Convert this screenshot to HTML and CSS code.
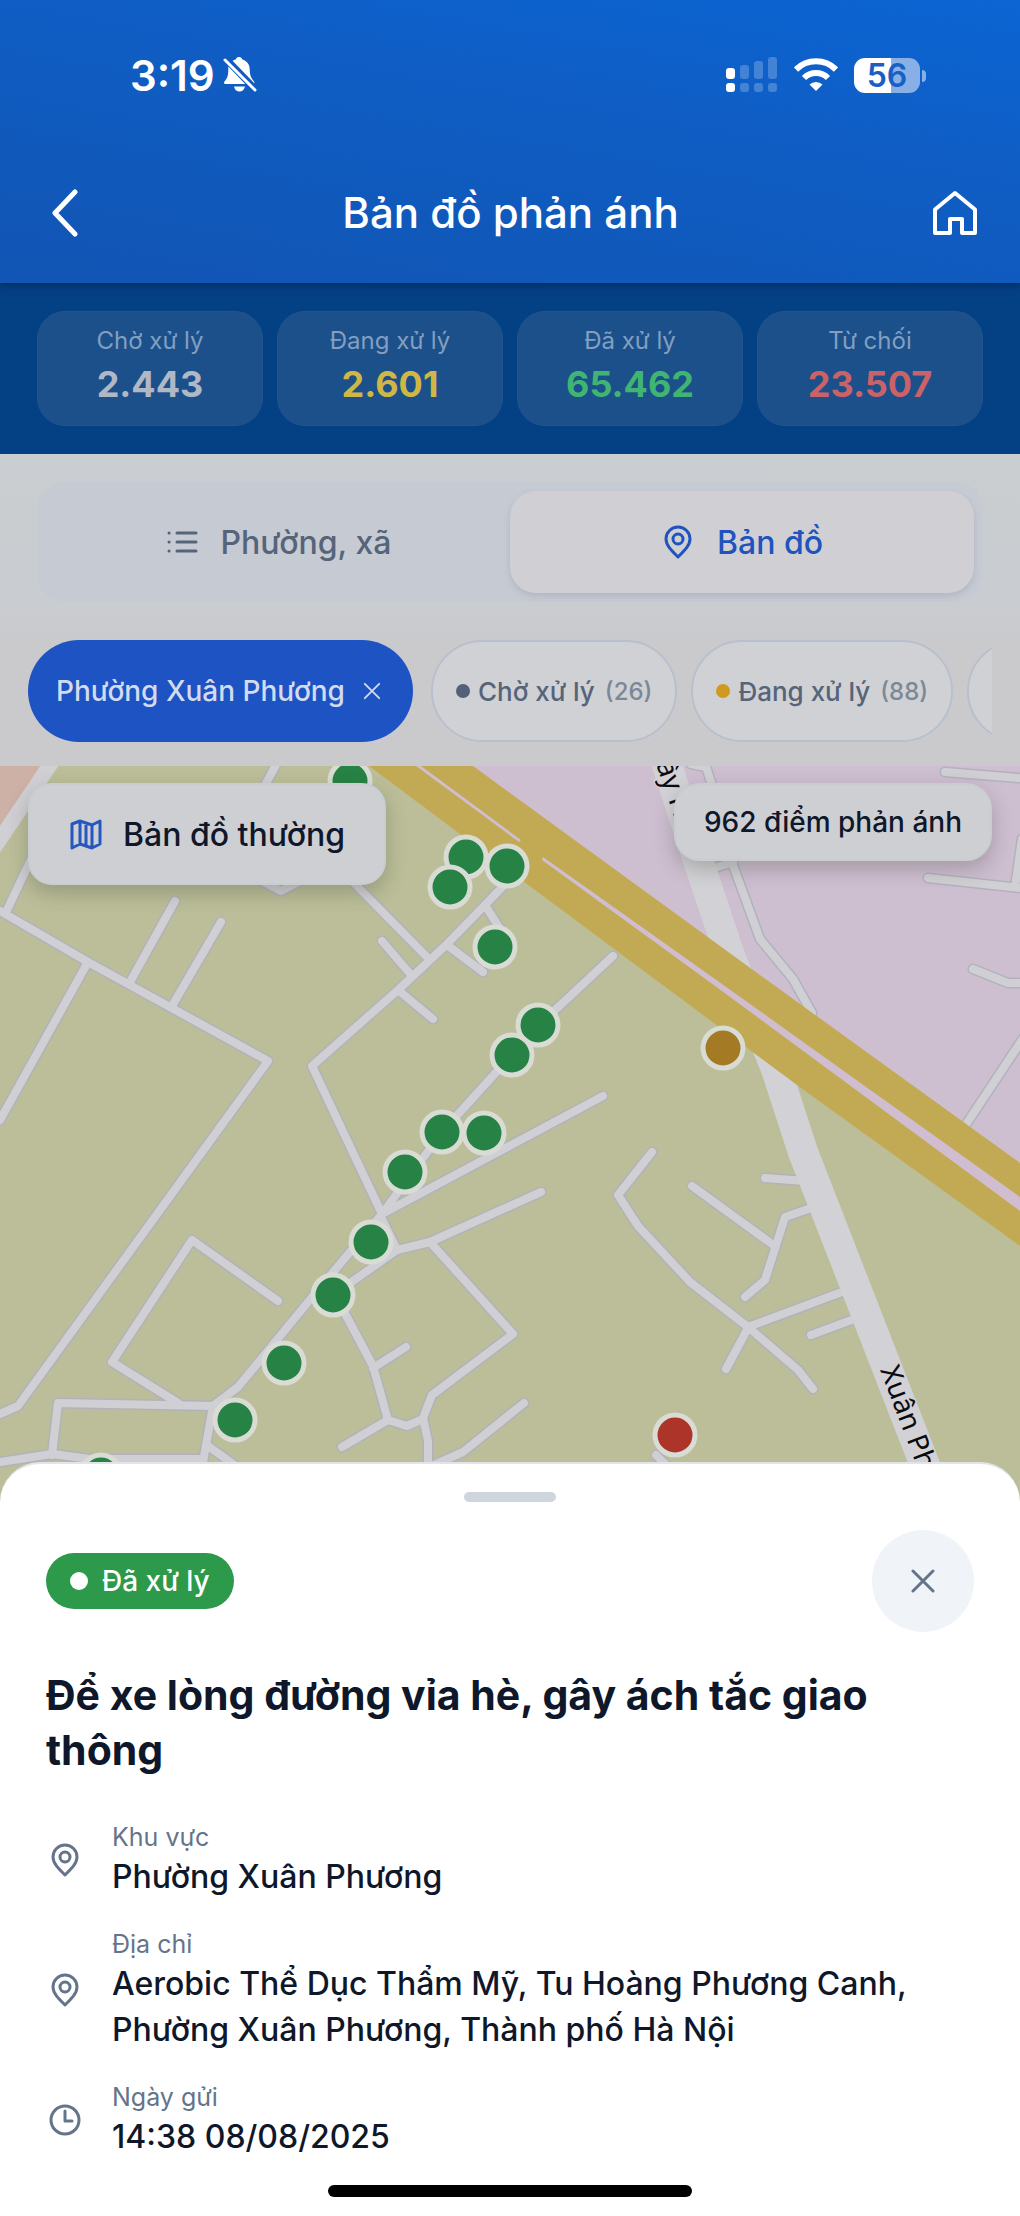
FILE: index.html
```
<!DOCTYPE html>
<html lang="vi">
<head>
	<meta charset="UTF-8">
	<meta name="viewport" content="width=device-width, initial-scale=1">
	<title>Bản đồ phản ánh</title>

	<link rel="stylesheet" href="styles.css">
</head>
<body>
	<div class="page">
		<header class="header">
			<div class="status-bar">
				<div class="status-left">
					<span class="time">3:19</span>
					<svg class="bell" width="34" height="36" viewBox="0 0 34 36">
						<path fill="#fff" d="M16 0c1.800 0 3 1 3.300 2.600C24 4 26.500 7.500 26.700 12c.2 6 1 8.500 4.300 12.500.8 1 .4 2.500-1 2.500H2.500c-1.500 0-2-1.500-1-2.500C4.500 21 5.300 18.500 5.300 12c0-4.500 2.600-8 7.400-9.400C13 1 14.200 0 16 0zM11 29.500h11c-.6 3-2.700 5-5.500 5s-5-2-5.500-5z"/>
						<path stroke="#115bc2" stroke-width="7" d="M2 1l31 32"/>
						<path stroke="#fff" stroke-width="3" stroke-linecap="round" d="M2 3l30 30"/>
					</svg>
				</div>
				<div class="status-right">
					<svg width="52" height="36" viewBox="0 0 52 36" fill="#fff">
						<rect x="0" y="11" width="9" height="11" rx="3"/>
						<rect x="0" y="26" width="9" height="9" rx="3"/>
						<g opacity=".22">
							<rect x="14" y="8" width="9" height="14" rx="3"/>
							<rect x="14" y="26" width="9" height="9" rx="3"/>
							<rect x="28" y="4" width="9" height="18" rx="3"/>
							<rect x="28" y="26" width="9" height="9" rx="3"/>
							<rect x="42" y="0" width="9" height="22" rx="3"/>
							<rect x="42" y="26" width="9" height="9" rx="3"/>
						</g>
					</svg>
					<svg width="44" height="34" viewBox="0 0 44 34" fill="none" stroke="#fff">
						<path stroke-width="6" d="M2 11.500a28.500 28.500 0 0 1 40 0"/>
						<path stroke-width="6" d="M10 20a17 17 0 0 1 24 0"/>
						<path fill="#fff" stroke="none" d="M15.500 26.500a9.500 9.500 0 0 1 13 0L22 33z"/>
					</svg>
					<div class="battery"><span>56</span></div>
				</div>
			</div>
			<div class="nav-bar">
				<button class="nav-btn" aria-label="Quay lại">
					<svg width="28" height="48" viewBox="0 0 28 48" fill="none" stroke="#fff" stroke-width="5" stroke-linecap="round" stroke-linejoin="round"><path d="M25 3L5 24l20 21"/></svg>
				</button>
				<h1>Bản đồ phản ánh</h1>
				<a class="nav-btn" href="#" aria-label="Trang chủ">
					<svg width="44" height="46" viewBox="0 0 44 46" fill="none" stroke="#fff" stroke-width="4" stroke-linejoin="round"><path d="M2 19.500L22 3l20 16.500V43H29V29H17v14H2z"/></svg>
				</a>
			</div>
		</header>

		<section class="stats">
			<div class="stat">
				<span class="stat-label">Chờ xử lý</span>
				<strong class="stat-value gray">2.443</strong>
			</div>
			<div class="stat">
				<span class="stat-label">Đang xử lý</span>
				<strong class="stat-value yellow">2.601</strong>
			</div>
			<div class="stat">
				<span class="stat-label">Đã xử lý</span>
				<strong class="stat-value green">65.462</strong>
			</div>
			<div class="stat">
				<span class="stat-label">Từ chối</span>
				<strong class="stat-value red">23.507</strong>
			</div>
		</section>

		<section class="controls">
			<div class="tabs">
				<button class="tab">
					<svg width="34" height="34" viewBox="0 0 34 34" fill="none" stroke="currentColor" stroke-width="3" stroke-linecap="round"><path d="M12 8h19M12 17h19M12 26h19M4 8h.1M4 17h.1M4 26h.1"/></svg>
					Phường, xã
				</button>
				<button class="tab active">
					<svg width="34" height="34" viewBox="0 0 34 34" fill="none" stroke="currentColor" stroke-width="3" stroke-linejoin="round"><path d="M17 32C11 26 5 20.500 5 14a12 12 0 0 1 24 0c0 6.500-6 12-12 18z"/><circle cx="17" cy="14" r="5"/></svg>
					Bản đồ
				</button>
			</div>
			<div class="chips">
				<button class="chip chip-area">
					Phường Xuân Phương
					<svg width="18" height="18" viewBox="0 0 20 20" fill="none" stroke="currentColor" stroke-width="2" stroke-linecap="round"><path d="M2 2l16 16M18 2L2 18"/></svg>
				</button>
				<button class="chip"><i class="dot dot-gray"></i>Chờ xử lý <small>(26)</small></button>
				<button class="chip"><i class="dot dot-yellow"></i>Đang xử lý <small>(88)</small></button>
				<button class="chip"><i class="dot dot-green"></i>Đã xử lý</button>
			</div>
		</section>

		<main class="map">
			<svg class="map-canvas" viewBox="0 767 1020 736" preserveAspectRatio="xMidYMin slice">
				<rect class="land" y="767" width="1020" height="736"/>
				<path class="land-pink" d="M418 767H1020V1210L722 990L540 860z"/>
				<path class="land-orange" d="M0 767H48L0 835z"/>

				<defs>
					<g id="roads">
						<path d="M0 912L88 963L268 1062L18 1407L0 1415"/>
						<path d="M7 911L36 850"/>
						<path d="M88 963L0 1121"/>
						<path d="M130 983L175 902"/>
						<path d="M172 1007L221 923"/>
						<path d="M279 760L262 792"/>
						<path d="M258 880L281 892L304 880"/>
						<path d="M350 880L428 959"/>
						<path d="M382 942L412 977"/>
						<path d="M510 880L485 906L445 947L398 991L312 1067L382 1215"/>
						<path d="M485 906L500 930"/>
						<path d="M447 946L483 973"/>
						<path d="M398 991L433 1020"/>
						<path d="M613 957L538 1027L442 1133L382 1215L313 1297L238 1388L213 1407L58 1404L52 1456"/>
						<path d="M382 1215L603 1097"/>
						<path d="M382 1220L397 1251"/>
						<path d="M330 1298L397 1251L430 1243L541 1193"/>
						<path d="M430 1243L513 1335L432 1396L423 1419L428 1442V1480"/>
						<path d="M340 1305L373 1367L388 1421L407 1427L423 1420"/>
						<path d="M373 1369L406 1348"/>
						<path d="M388 1421L342 1448"/>
						<path d="M524 1404L463 1453L425 1470"/>
						<path d="M278 1302L192 1241L112 1363L178 1404"/>
						<path d="M213 1407L200 1480"/>
						<path d="M208 1447L240 1470"/>
						<path d="M0 1463L52 1455L90 1460H203"/>
						<path d="M652 1153L618 1196L638 1227L690 1283L748 1328L798 1371L813 1390"/>
						<path d="M748 1329L726 1370"/>
						<path d="M748 1328L850 1290"/>
						<path d="M811 1336L865 1316"/>
						<path d="M692 1187L772 1245"/>
						<path d="M745 1298L765 1281L785 1218L820 1206"/>
						<path d="M765 1179L805 1182"/>
						<path d="M656 1456L675 1475"/>
						<path d="M691 765L706 768L720 810L733 866L760 940L793 980L812 1014"/>
						<path d="M705 872L733 863"/>
						<path d="M945 773L1030 780"/>
						<path d="M928 879L1030 890"/>
						<path d="M1015 888L1022 840"/>
						<path d="M973 970L1008 984H1030"/>
						<path d="M965 1127L1026 1035"/>
					</g>
				</defs>
				<use class="road-edge" href="#roads"/>
				<use class="road" href="#roads"/>
				<path class="road-wide" d="M54 760L-6 849"/>
				<path class="road-main" d="M665 760L700 867L730 957L776 1070L803 1153L942 1510"/>

				<!-- highway -->
				<path class="highway" d="M369 767H473L742 963L1020 1164V1247L797 1086L527 885z"/>
				<path class="median" d="M416 767H421L521 841L519 843zM543 858L722 985L1020 1198V1212L722 992L542 861z"/>

				<text class="street" transform="translate(656 765) rotate(71)">ây Hồ</text>
				<text class="street" transform="translate(880 1371) rotate(69)">Xuân Phương</text>

				<g class="pins">
					<circle cx="350" cy="782" r="20"/>
					<circle cx="466" cy="858" r="20"/>
					<circle cx="507" cy="867" r="20"/>
					<circle cx="450" cy="888" r="20"/>
					<circle cx="495" cy="948" r="20"/>
					<circle cx="538" cy="1026" r="20"/>
					<circle cx="512" cy="1056" r="20"/>
					<circle cx="442" cy="1133" r="20"/>
					<circle cx="484" cy="1134" r="20"/>
					<circle cx="405" cy="1173" r="20"/>
					<circle cx="371" cy="1243" r="20"/>
					<circle cx="333" cy="1296" r="20"/>
					<circle cx="284" cy="1364" r="20"/>
					<circle cx="235" cy="1421" r="20"/>
					<circle cx="101" cy="1476" r="20"/>
					<circle class="pin-amber" cx="723" cy="1049" r="20"/>
					<circle class="pin-red" cx="675" cy="1436" r="20"/>
				</g>
			</svg>

			<div class="map-top">
				<button class="map-type">
					<svg width="34" height="34" viewBox="0 0 34 34" fill="none" stroke="currentColor" stroke-width="3" stroke-linejoin="round"><path d="M3 7l8-3l12 4l8-4v23l-8 4l-12-4l-8 4zM11 4v23M17 6v23M23 8v23"/></svg>
					Bản đồ thường
				</button>
				<div class="map-count">962 điểm phản ánh</div>
			</div>
		</main>

		<section class="sheet">
			<div class="handle"></div>
			<div class="sheet-head">
				<span class="badge"><i></i>Đã xử lý</span>
				<button class="close" aria-label="Đóng">
					<svg width="24" height="24" viewBox="0 0 24 24" fill="none" stroke="currentColor" stroke-width="3" stroke-linecap="round"><path d="M2 2l20 20M22 2L2 22"/></svg>
				</button>
			</div>
			<h2>Để xe lòng đường vỉa hè, gây ách tắc giao thông</h2>
			<dl class="details">
				<div class="detail">
					<svg width="34" height="34" viewBox="0 0 34 34" fill="none" stroke="currentColor" stroke-width="3" stroke-linejoin="round"><path d="M17 32C11 26 5 20.500 5 14a12 12 0 0 1 24 0c0 6.500-6 12-12 18z"/><circle cx="17" cy="14" r="5"/></svg>
					<div>
						<dt>Khu vực</dt>
						<dd>Phường Xuân Phương</dd>
					</div>
				</div>
				<div class="detail">
					<svg width="34" height="34" viewBox="0 0 34 34" fill="none" stroke="currentColor" stroke-width="3" stroke-linejoin="round"><path d="M17 32C11 26 5 20.500 5 14a12 12 0 0 1 24 0c0 6.500-6 12-12 18z"/><circle cx="17" cy="14" r="5"/></svg>
					<div>
						<dt>Địa chỉ</dt>
						<dd>Aerobic Thể Dục Thẩm Mỹ, Tu Hoàng Phương Canh, Phường Xuân Phương, Thành phố Hà Nội</dd>
					</div>
				</div>
				<div class="detail">
					<svg width="34" height="34" viewBox="0 0 34 34" fill="none" stroke="currentColor" stroke-width="3" stroke-linecap="round" stroke-linejoin="round"><circle cx="17" cy="17" r="14"/><path d="M17 8v10h7"/></svg>
					<div>
						<dt>Ngày gửi</dt>
						<dd>14:38 08/08/2025</dd>
					</div>
				</div>
			</dl>
			<div class="home-bar"></div>
		</section>
	</div>
</body>
</html>
```

FILE: styles.css
```
* {
	box-sizing: border-box;
}
body {
	margin: 0;
	font-family: Inter, "Noto Sans", sans-serif;
	background: #fff;
}
h1, h2, dl, dd {
	margin: 0;
}
button {
	margin: 0;
	padding: 0;
	border: 0;
	background: none;
	font: inherit;
	color: inherit;
}
svg {
	display: block;
	flex-shrink: 0;
}
.page {
	display: flex;
	flex-direction: column;
	min-height: 100vh;
}

/* header */
.header {
	position: relative;
	z-index: 1;
	color: #fff;
	background: linear-gradient(190deg, #0b65d3 0%, #0f5ec6 35%, #1059bb 70%, #1255b4 100%);
	box-shadow: 0 2px 8px rgba(0, 20, 60, 0.5);
}
.status-bar {
	display: flex;
	justify-content: space-between;
	align-items: center;
	height: 150px;
	padding: 0 94px 0 130px;
}
.status-left, .status-right {
	display: flex;
	align-items: center;
}
.status-left {
	gap: 8px;
}
.status-right {
	gap: 16px;
}
.time {
	font-size: 42px;
	font-weight: 600;
}
.battery {
	position: relative;
	width: 66px;
	height: 35px;
	margin-right: 6px;
	border-radius: 11px;
	background: linear-gradient(90deg, #fff 56%, #88b0e6 56%);
	color: #1a5fc4;
	font-size: 32px;
	font-weight: 600;
	line-height: 35px;
	text-align: center;
}
.battery::after {
	content: "";
	position: absolute;
	top: 12px;
	right: -6px;
	width: 4px;
	height: 12px;
	border-radius: 0 4px 4px 0;
	background: #88b0e6;
}
.nav-bar {
	display: flex;
	justify-content: space-between;
	align-items: center;
	height: 133px;
	padding: 0 43px 8px 50px;
}
.nav-btn {
	color: #fff;
}
.nav-bar h1 {
	padding-left: 10px;
	font-size: 42px;
	font-weight: 500;
	line-height: 56px;
}

/* stats */
.stats {
	display: grid;
	grid-template-columns: repeat(4, 1fr);
	gap: 14px;
	padding: 28px 37px;
	background: #044184;
}
.stat {
	display: flex;
	flex-direction: column;
	align-items: center;
	gap: 5px;
	padding: 14px 0 18px;
	border: 1px solid #22548d;
	border-radius: 28px;
	background: #1c508b;
}
.stat-label {
	font-size: 24px;
	line-height: 30px;
	color: #829fc0;
}
.stat-value {
	font-size: 36px;
	font-weight: 700;
	line-height: 46px;
}
.gray { color: #b0b8c6; }
.yellow { color: #cfb745; }
.green { color: #40b572; }
.red { color: #cb6267; }

/* tabs + filter chips */
.controls {
	padding: 28px 28px 24px;
	background: linear-gradient(#c9ced1 0, #c9ccd0 50%, #cacacd 60%);
}
.tabs {
	display: flex;
	margin: 0 9px;
	padding: 9px;
	border-radius: 28px;
	background: #c5cad3;
}
.tab {
	display: flex;
	flex: 1;
	justify-content: center;
	align-items: center;
	gap: 22px;
	height: 102px;
	border-radius: 26px;
	color: #56647a;
	font-size: 32px;
	font-weight: 500;
}
.tab.active {
	background: #d0d0d4;
	color: #1f53bd;
	box-shadow: 0 3px 6px rgba(80, 80, 110, 0.16);
}
.chips {
	display: flex;
	align-items: center;
	gap: 14px;
	margin-top: 38px;
	overflow: hidden;
}
.chip {
	display: flex;
	flex-shrink: 0;
	align-items: center;
	height: 102px;
	padding: 0 23px;
	border: 2px solid #b8c0cd;
	border-radius: 51px;
	background: #cfd1d5;
	color: #56647a;
	font-size: 26px;
	font-weight: 500;
	white-space: nowrap;
}
.chip small {
	margin-left: 10px;
	font-size: 24px;
	font-weight: 500;
	color: #7c8798;
}
.chip-area {
	gap: 18px;
	margin-right: 4px;
	padding: 0 32px 0 28px;
	border: 0;
	background: #1e53c4;
	color: #d3dbee;
	font-size: 28px;
}
.dot {
	width: 14px;
	height: 14px;
	margin-right: 8px;
	border-radius: 50%;
}
.dot-gray { background: #536178; }
.dot-yellow { background: #cf9a20; }
.dot-green { background: #278745; }

/* map */
.map {
	position: relative;
	flex: 1;
	min-height: 600px;
	overflow: hidden;
}
.map-canvas {
	position: absolute;
	width: 100%;
	height: 100%;
}
.land { fill: #bbbe98; }
.land-pink { fill: #cdbed0; }
.land-orange { fill: #cdb0a6; }
.road, .road-edge, .road-wide, .road-main {
	fill: none;
	stroke-linecap: round;
	stroke-linejoin: round;
}
.road-edge {
	stroke: #b2b2bd;
	stroke-width: 11px;
}
.road {
	stroke: #d0d0d4;
	stroke-width: 8px;
}
.road-wide {
	stroke: #d0d0d4;
	stroke-width: 15px;
}
.road-main {
	stroke: #d2d2d6;
	stroke-width: 30px;
}
.highway { fill: #c2aa54; }
.median { fill: #d0bed0; }
.street {
	fill: #0a0a0f;
	stroke: #d2d2d6;
	stroke-width: 3px;
	paint-order: stroke;
	font-family: "Noto Sans", sans-serif;
	font-size: 28px;
}
.pins circle {
	fill: #278245;
	stroke: #d8dcd4;
	stroke-width: 5px;
}
.pins .pin-amber { fill: #a47a24; }
.pins .pin-red { fill: #ac3428; }
.map-top {
	position: relative;
	display: flex;
	justify-content: space-between;
	align-items: flex-start;
	padding: 17px 28px;
}
.map-type, .map-count {
	border: 2px solid #c8cdd2;
	background: #cecfd3;
	color: #0f172a;
	font-weight: 500;
	box-shadow: 0 8px 20px rgba(60, 60, 50, 0.28);
}
.map-type {
	display: flex;
	align-items: center;
	gap: 20px;
	height: 102px;
	padding: 0 39px;
	border-radius: 24px;
	font-size: 32px;
}
.map-type svg {
	color: #2457c0;
}
.map-count {
	padding: 18px 28px;
	border-radius: 26px;
	font-size: 28px;
	line-height: 38px;
}

/* bottom sheet */
.sheet {
	position: relative;
	margin-top: -40px;
	padding: 28px 46px 19px;
	border-top: 2px solid #e2e4ea;
	border-radius: 40px 40px 0 0;
	background: #fff;
	color: #0f172a;
}
.handle {
	width: 92px;
	height: 10px;
	margin: 0 auto 28px;
	border-radius: 5px;
	background: #cfd5dd;
}
.sheet-head {
	display: flex;
	justify-content: space-between;
	align-items: center;
}
.badge {
	display: flex;
	align-items: center;
	gap: 14px;
	height: 56px;
	padding: 0 24px;
	border-radius: 28px;
	background: #2d994b;
	color: #fff;
	font-size: 28px;
	font-weight: 500;
}
.badge i {
	width: 18px;
	height: 18px;
	border-radius: 50%;
	background: #fff;
}
.close {
	display: flex;
	justify-content: center;
	align-items: center;
	width: 102px;
	height: 102px;
	border-radius: 50%;
	background: #f0f4f9;
	color: #64748b;
}
.sheet h2 {
	margin-top: 36px;
	font-size: 41px;
	font-weight: 700;
	line-height: 55px;
}
.details {
	display: flex;
	flex-direction: column;
	gap: 27px;
	margin-top: 42px;
}
.detail {
	display: flex;
	align-items: center;
	gap: 30px;
	padding-left: 2px;
	color: #64748b;
}
.detail dt {
	font-size: 25px;
	line-height: 34px;
}
.detail dd {
	color: #0f172a;
	font-size: 32px;
	font-weight: 500;
	line-height: 46px;
}
.home-bar {
	width: 364px;
	height: 12px;
	margin: 25px auto 0;
	border-radius: 6px;
	background: #000;
}
```
